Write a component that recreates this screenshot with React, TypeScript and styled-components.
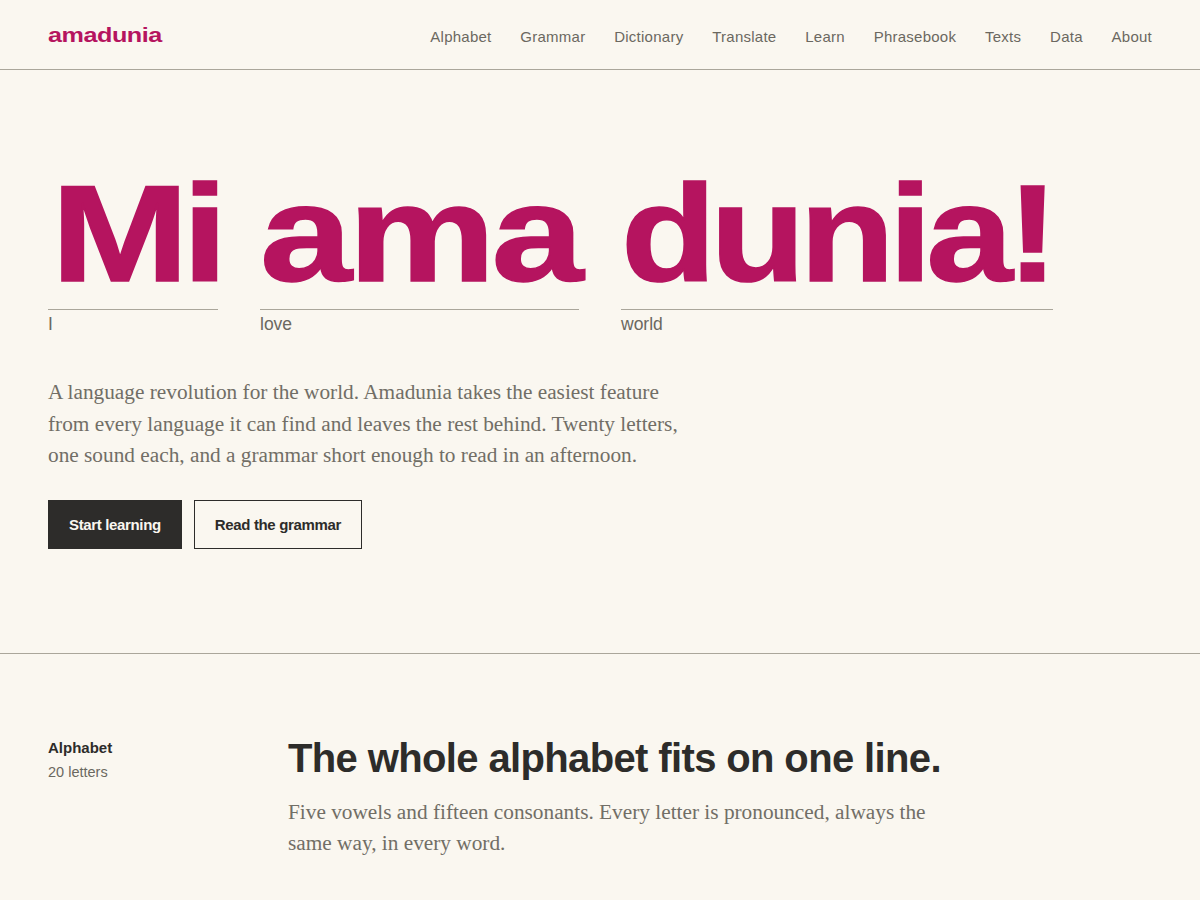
import styled, { createGlobalStyle } from "styled-components";

const Global = createGlobalStyle`
  html, body { margin: 0; padding: 0; background: #faf7f0; }
  body { font-family: "Liberation Sans", Arial, sans-serif; color: #2d2c2a; }
  * { box-sizing: border-box; }
`;

const Page = styled.div`
  height: 900px;
  overflow: hidden;
  background: #faf7f0;
`;

const Header = styled.header`
  height: 70px;
  padding: 0 48px;
  display: flex;
  align-items: center;
  justify-content: space-between;
  border-bottom: 1px solid #aaa69b;
`;

const Logo = styled.a`
  font-weight: 700;
  font-size: 21px;
  letter-spacing: -0.4px;
  color: #b5145f;
  transform: scaleX(1.2);
  transform-origin: left center;
`;

const Nav = styled.nav`
  display: flex;
  gap: 28.8px;
  padding-top: 3px;
`;

const NavLink = styled.a`
  font-size: 15px;
  letter-spacing: 0.25px;
  color: #6b6860;
`;

const Hero = styled.section`
  padding: 96px 48px 104px;
  border-bottom: 1px solid #aaa69b;
`;

const Gloss = styled.div`
  display: flex;
  gap: 42px;
`;

const Word = styled.div<{ $width: number }>`
  width: ${(p) => p.$width}px;
  display: flex;
  flex-direction: column;
`;

const BigLine = styled.div`
  height: 144px;
  border-bottom: 1px solid #aaa69b;
`;

const Big = styled.span<{ $sx: number; $track: number; $shift: number }>`
  display: inline-block;
  white-space: nowrap;
  font-weight: 700;
  font-size: 138px;
  line-height: 138px;
  letter-spacing: ${(p) => p.$track}px;
  color: #b5145f;
  -webkit-text-stroke: 1.5px #b5145f;
  margin-top: -2px;
  margin-left: ${(p) => p.$shift}px;
  transform: scaleX(${(p) => p.$sx});
  transform-origin: left center;
`;

const Meaning = styled.span`
  font-size: 17.5px;
  line-height: 28px;
  color: #6b6860;
`;

const Lead = styled.p`
  font-family: "Liberation Serif", serif;
  font-size: 21.3px;
  line-height: 31.5px;
  color: #716e66;
  margin: 39px 0 28px;
  width: 650px;
`;

const Actions = styled.div`
  display: flex;
  gap: 12px;
`;

const Button = styled.a<{ $solid?: boolean }>`
  height: 49px;
  padding: 0 20px;
  display: flex;
  align-items: center;
  font-size: 15px;
  font-weight: 700;
  letter-spacing: -0.35px;
  border: 1px solid #2d2c2a;
  background: ${(p) => (p.$solid ? "#2d2c2a" : "transparent")};
  color: ${(p) => (p.$solid ? "#faf7f0" : "#2d2c2a")};
`;

const Section = styled.section`
  padding: 80px 48px 0;
  display: grid;
  grid-template-columns: 240px 660px;
`;

const SideTitle = styled.div`
  font-size: 15px;
  font-weight: 700;
  margin-top: 5px;
`;

const SideNote = styled.div`
  font-size: 14.5px;
  color: #6b6860;
  margin-top: 8px;
`;

const Heading = styled.h2`
  margin: 0;
  font-size: 40px;
  line-height: 48px;
  letter-spacing: -0.63px;
`;

const Body = styled.p`
  font-family: "Liberation Serif", serif;
  font-size: 21.3px;
  line-height: 31.5px;
  color: #716e66;
  margin: 15px 0 0;
`;

const links = ["Alphabet", "Grammar", "Dictionary", "Translate", "Learn", "Phrasebook", "Texts", "Data", "About"];
const words = [
  { big: "Mi", meaning: "I", width: 170, sx: 1.2, track: -5.8, shift: 3 },
  { big: "ama", meaning: "love", width: 319, sx: 1.2, track: -3.3, shift: 0 },
  { big: "dunia!", meaning: "world", width: 432, sx: 1.13, track: -5.3, shift: 0 },
];

export default function App() {
  return (
    <Page>
      <Global />
      <Header>
        <Logo>amadunia</Logo>
        <Nav>{links.map((l) => <NavLink key={l}>{l}</NavLink>)}</Nav>
      </Header>
      <Hero>
        <Gloss>
          {words.map((w) => (
            <Word key={w.big} $width={w.width}>
              <BigLine>
                <Big $sx={w.sx} $track={w.track} $shift={w.shift}>{w.big}</Big>
              </BigLine>
              <Meaning>{w.meaning}</Meaning>
            </Word>
          ))}
        </Gloss>
        <Lead>
          A language revolution for the world. Amadunia takes the easiest feature from every language it can find and leaves the rest behind. Twenty letters, one sound each, and a grammar short enough to read in an afternoon.
        </Lead>
        <Actions>
          <Button $solid>Start learning</Button>
          <Button>Read the grammar</Button>
        </Actions>
      </Hero>
      <Section>
        <div>
          <SideTitle>Alphabet</SideTitle>
          <SideNote>20 letters</SideNote>
        </div>
        <div>
          <Heading>The whole alphabet fits on one line.</Heading>
          <Body>Five vowels and fifteen consonants. Every letter is pronounced, always the same way, in every word.</Body>
        </div>
      </Section>
    </Page>
  );
}
